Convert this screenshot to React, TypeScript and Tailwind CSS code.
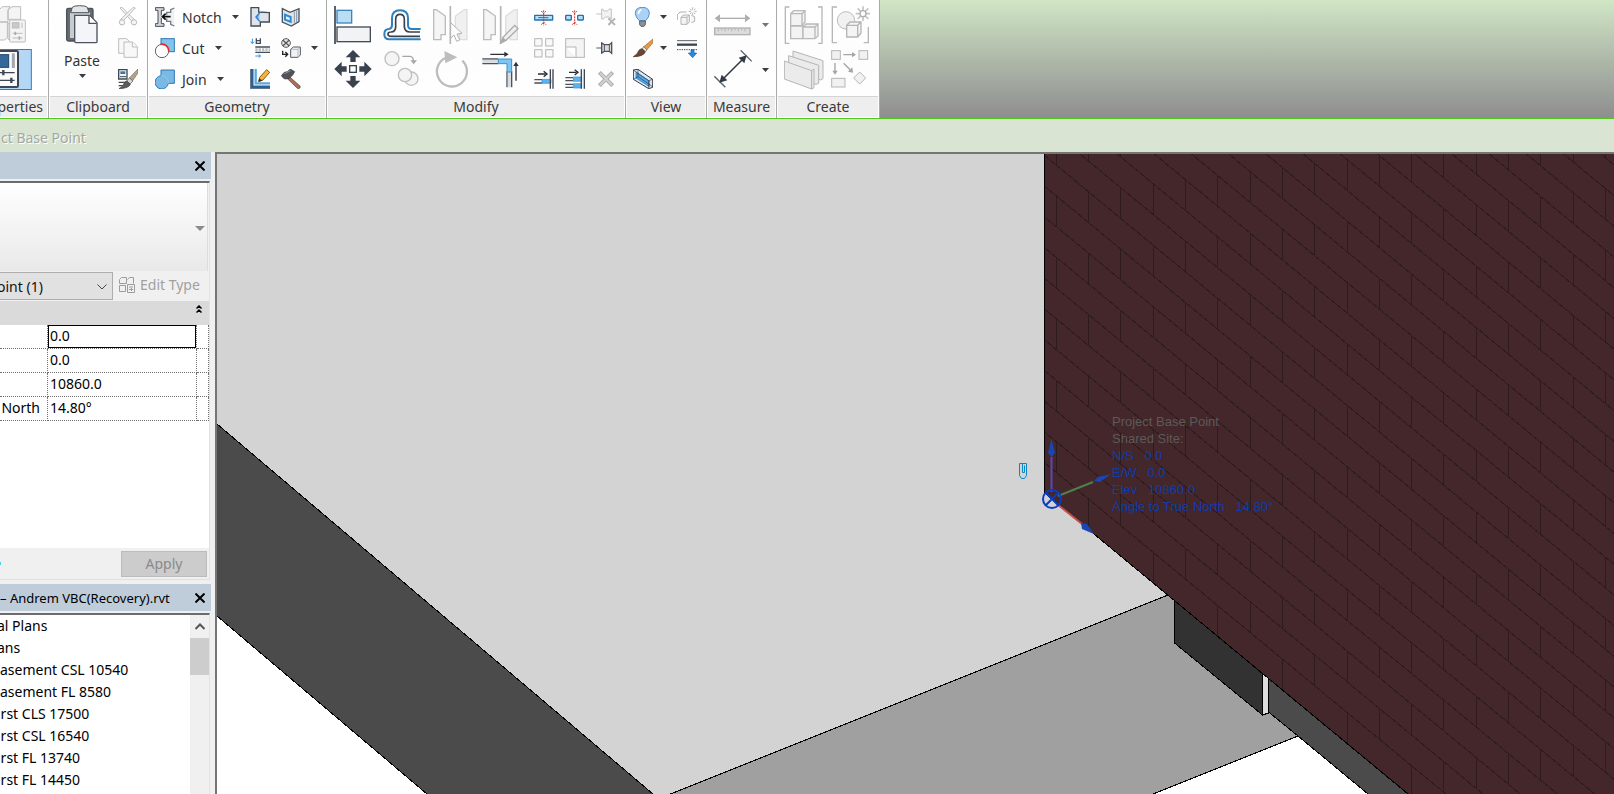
import type { ReactNode } from "react";

type IconProps = { box: string; className?: string; children: ReactNode };

function Icon({ box, className = "size-5", children }: IconProps) {
  return (
    <svg viewBox={box} className={`${className} block shrink-0`} fill="none" aria-hidden="true">
      {children}
    </svg>
  );
}

function Tool({ label, disabled, children, className = "" }: { label: string; disabled?: boolean; children: ReactNode; className?: string }) {
  return (
    <button type="button" aria-label={label} disabled={disabled} className={`flex shrink-0 items-center ${className}`}>
      {children}
    </button>
  );
}

function Arrow() {
  return (
    <svg viewBox="0 0 7 4" className="block h-1 w-[7px] shrink-0 fill-[#3c3c3c]" aria-hidden="true">
      <path d="M0 0H7L3.5 4Z" />
    </svg>
  );
}

function Panel({ title, width, children }: { title: string; width: string; children: ReactNode }) {
  return (
    <section className={`flex shrink-0 flex-col border-r border-[#a9aba9] bg-linear-to-b from-white via-[#fdfdfd] to-white ${width}`}>
      <div className="flex h-24 items-start">{children}</div>
      <h2 className="mx-px flex h-[21px] items-end justify-center overflow-hidden border-t border-[#d4d4d4] bg-[#eeeeee] text-[14px] leading-5 text-[#3a3a3a]">
        {title}
      </h2>
      <div className="h-px bg-white" />
    </section>
  );
}

const column = "flex flex-col gap-[11px] pt-[7px]";
const bigColumn = "flex flex-col gap-1.5 pt-1.5";

function PropertiesPanel() {
  return (
    <section className="flex w-[49px] shrink-0 flex-col border-r border-[#a9aba9] bg-white">
      <div className="flex h-24 flex-col items-start gap-[5px] pt-1.5">
        <Tool label="Type properties" disabled>
          <Icon box="0 18 84 114" className="h-[38px] w-7">
            <g stroke="#bcbcbc" strokeWidth="3" fill="#f4f4f4">
              <path d="M-4 30L8 20H30L24 30V66H-4ZM24 30L36 20H62V58H24ZM-4 66H22V112L14 120H-4ZM24 70H40V118H24Z" />
              <rect x="29" y="60" width="47" height="66" rx="3" />
              <rect x="37" y="68" width="20" height="16" fill="#c9c9c9" />
              <path d="M66 68V84M38 100H68M38 114H68" />
            </g>
            <path d="M46 95V105M58 109V119" stroke="#aaa" strokeWidth="5" />
          </Icon>
        </Tool>
        <Tool label="Properties">
          <Icon box="0 147 96 123" className="h-[41px] w-8">
            <rect x="-3" y="148.500" width="97" height="120" fill="#b4d7f6" stroke="#2a7fcf" strokeWidth="3" />
            <rect x="-10" y="153" width="64" height="108" rx="4" fill="#fafafa" stroke="#3d4654" strokeWidth="6" />
            <rect x="-4" y="164" width="30" height="38" fill="#35689a" stroke="#1f466c" strokeWidth="3" />
            <path d="M40 160V204" stroke="#a5a9ad" strokeWidth="9" />
            <path d="M0 218H44M0 241H44" stroke="#3d4654" strokeWidth="4" />
            <path d="M10 210V226M34 233V249" stroke="#3d4654" strokeWidth="7" />
          </Icon>
        </Tool>
      </div>
      <h2 className="mr-px flex h-[21px] items-end justify-end overflow-hidden border-t border-[#d4d4d4] bg-[#eeeeee] pr-1 text-[14px] leading-5 text-[#3a3a3a]">
        perties
      </h2>
      <div className="h-px bg-white" />
    </section>
  );
}

function ClipboardPanel() {
  return (
    <Panel title="Clipboard" width="w-[99px]">
      <button type="button" className="flex w-[66px] flex-col items-center pt-[5px] text-[14px] leading-5 text-[#333]">
        <Icon box="198 15 102 117" className="h-[39px] w-[34px]">
          <rect x="203" y="25" width="79" height="98" rx="5" fill="#686c72" stroke="#4c5057" strokeWidth="4" />
          <rect x="213" y="36" width="60" height="78" fill="#c8cbd0" />
          <path d="M220 22Q224 17 242 17Q262 17 265 22L270 38H215Z" fill="#e3e6e9" stroke="#4f555e" strokeWidth="3" />
          <path d="M227 46H272L294 68V125Q294 128 290 128H231Q227 128 227 124Z" fill="#f3f5f8" stroke="#4b535f" strokeWidth="4" />
          <path d="M270 47V70H293" fill="#fff" stroke="#4b535f" strokeWidth="4" />
        </Icon>
        <span className="mt-[7px]">Paste</span>
        <span className="mt-[3px]"><Arrow /></span>
      </button>
      <div className={`${column} pl-[3px]`}>
        <Tool label="Cut to clipboard" disabled>
          <Icon box="354 21 60 60">
            <g stroke="#b9b9b9" strokeWidth="3" fill="#f5f5f5">
              <path d="M360 24L396 64L402 58L366 22Z" />
              <path d="M406 24L368 64L362 58L400 22Z" />
              <circle cx="366" cy="67" r="8" />
              <circle cx="402" cy="67" r="8" />
            </g>
          </Icon>
        </Tool>
        <Tool label="Copy to clipboard" disabled>
          <Icon box="354 114 60 60">
            <g stroke="#bdbdbd" strokeWidth="3" fill="#f8f8f8">
              <path d="M356 116H380L390 126V160H356Z" />
              <path d="M372 126H398L412 140V172H372Z" />
              <path d="M397 126V141H412" />
            </g>
          </Icon>
        </Tool>
        <Tool label="Match type properties">
          <Icon box="354 207 60 60">
            <path d="M356 209H381V237H356Z" fill="#f2f4f6" stroke="#3f4956" strokeWidth="4" />
            <path d="M361 214H376V222H361Z" fill="#3478b5" />
            <path d="M360 230H378" stroke="#3f4956" strokeWidth="3" />
            <path d="M356 247H374M356 257H368" stroke="#3f4956" strokeWidth="4" />
            <path d="M414 207L413 220L398 242L388 234Z" fill="#b5a48c" stroke="#6f6758" strokeWidth="2" />
            <path d="M388 234L399 243L390 252L380 244Z" fill="#d8d8d8" stroke="#555" strokeWidth="2" />
            <path d="M380 243L391 252Q388 265 357 266Q371 258 372 250Q374 244 380 243Z" fill="#5d5a58" stroke="#3d3a38" strokeWidth="2" />
          </Icon>
        </Tool>
      </div>
    </Panel>
  );
}

function GeometryPanel() {
  const row = "flex h-5 items-center text-[14px] leading-5 text-[#333]";
  const text = "ml-[7px] mr-2.5 pt-px";
  return (
    <Panel title="Geometry" width="w-[179px]">
      <div className={`${column} w-[102px] pl-[7px]`}>
        <button type="button" className={row}>
          <Icon box="465 21 60 60">
            <path d="M466 23H492V31H484V71H492V79H466V71H474V31H466Z" fill="#d5d9de" stroke="#444b55" strokeWidth="3" />
            <path d="M523 24L512 29V37H500V64H512V73L523 78" fill="#eef0f2" stroke="#747a83" strokeWidth="4" />
            <path d="M486 50H512M497 41L487 50L497 59" stroke="#fff" strokeWidth="9" />
            <path d="M486 50H512M497 41L487 50L497 59" stroke="#111" strokeWidth="5" />
          </Icon>
          <span className={text}>Notch</span>
          <Arrow />
        </button>
        <button type="button" className={row}>
          <Icon box="465 114 60 60">
            <rect x="483" y="116" width="40" height="39" fill="#86c3ea" stroke="#2d7ab5" strokeWidth="3" />
            <circle cx="486" cy="153" r="20" fill="#fff" stroke="#59616b" strokeWidth="3" />
            <path d="M482 133A20 20 0 0 1 506 155" stroke="#ef2b2d" strokeWidth="5" />
          </Icon>
          <span className={text}>Cut</span>
          <Arrow />
        </button>
        <button type="button" className={row}>
          <Icon box="465 207 60 60">
            <path d="M483 210H523V250H505A20 20 0 1 1 483 227Z" fill="#79b9e4" stroke="#2d7ab5" strokeWidth="3" />
            <path d="M483 227A20 20 0 0 1 505 250" stroke="#9ad0f3" strokeWidth="2" />
          </Icon>
          <span className={text}>Join</span>
          <Arrow />
        </button>
      </div>
      <div className={column}>
        <Tool label="Wall joins">
          <Icon box="750 21 60 60">
            <path d="M753 23H776V36L808 38V66H781V78H753Z" fill="#dfe4ea" stroke="#444c57" strokeWidth="4" />
            <path d="M766 51L778 38V65Z" fill="#7fc0f5" />
            <path d="M779 39L768 51L779 64" stroke="#2c7fd0" strokeWidth="4" />
          </Icon>
        </Tool>
        <Tool label="Beam and column joins">
          <Icon box="750 114 60 60">
            <path d="M757 116V130M752 125L757 131L762 125" stroke="#2d93e6" strokeWidth="3" />
            <path d="M769 115V130H781V115M769 122H781" stroke="#454d58" strokeWidth="4" />
            <path d="M766 141H810M766 157H810" stroke="#454d58" strokeWidth="4" />
            <path d="M766 149H810" stroke="#b9bec5" strokeWidth="9" strokeDasharray="7 3" />
            <path d="M766 168H781M776 163L782 168L776 173" stroke="#2d93e6" strokeWidth="3" />
          </Icon>
        </Tool>
        <Tool label="Edit profile">
          <Icon box="750 207 60 60">
            <path d="M756 207V261H810" stroke="#27629a" strokeWidth="9" />
            <path d="M767 207V250H810" stroke="#5ea8dd" strokeWidth="7" />
            <path d="M751 207V266H810" stroke="#484f59" strokeWidth="2" />
            <path d="M779 232L800 209L809 217L789 240L776 244Z" fill="#f4b43c" stroke="#8b5a1a" strokeWidth="3" />
            <path d="M775 246L778 235L787 242Z" fill="#3a2b1a" />
          </Icon>
        </Tool>
      </div>
      <div className={`${column} ml-[11px]`}>
        <Tool label="Cope">
          <Icon box="843 21 60 60">
            <path d="M847 26L870 37L897 26V65L874 78L847 66Z" fill="#dfe6ec" stroke="#4a535e" strokeWidth="4" />
            <path d="M852 40L875 49V70L852 61Z" fill="#2f8ad2" />
            <path d="M858 49L869 53V61L858 57Z" fill="#e8f4fc" />
            <path d="M890 31V67M883 34V71" stroke="#8d96a1" strokeWidth="3" />
          </Icon>
        </Tool>
        <Tool label="Split face">
          <Icon box="843 114 60 60">
            <circle cx="858" cy="129" r="13" fill="#e7e7e7" stroke="#58585a" strokeWidth="3" />
            <path d="M849 121L867 137M867 121L849 137" stroke="#58585a" strokeWidth="4" />
            <path d="M848 152V163H862M856 156L863 163L856 170" stroke="#222" strokeWidth="4" />
            <path d="M872 148L880 141H901V165L894 172H872Z" fill="#f0f1f3" stroke="#555c66" strokeWidth="3" />
            <path d="M872 148H894L901 141M894 148V172" stroke="#9aa0a8" strokeWidth="2" />
          </Icon>
        </Tool>
        <Tool label="Demolish">
          <Icon box="843 207 60 60">
            <path d="M866 228L900 258Q903 264 896 266Q891 266 889 262L860 234Z" fill="#a8705a" stroke="#5f3a2c" strokeWidth="2" />
            <path d="M844 227L853 217L862 215L871 207L884 215L878 225L868 235L856 237L851 235Z" fill="#50545a" stroke="#303338" strokeWidth="2" />
            <path d="M853 221L872 212" stroke="#999" strokeWidth="3" />
          </Icon>
        </Tool>
      </div>
      <button type="button" aria-label="More joins" className="ml-2.5 mt-[46px]"><Arrow /></button>
    </Panel>
  );
}

function ModifyPanel() {
  return (
    <Panel title="Modify" width="w-[299px]">
      <div className={`${bigColumn} ml-[7px]`}>
        <Tool label="Align">
          <Icon box="42 18 114 114" className="size-[38px]">
            <rect x="51" y="31" width="44" height="38" fill="#b9ddf3" stroke="#3b86bd" strokeWidth="4" />
            <rect x="51" y="81" width="100" height="44" fill="#f2f3f5" stroke="#444c58" strokeWidth="4" />
            <path d="M45 18V134" stroke="#3b424d" strokeWidth="5" />
          </Icon>
        </Tool>
        <Tool label="Move">
          <Icon box="42 150 114 114" className="size-[38px]">
            <path d="M99 150L121 172H107V186H91V172H77ZM99 264L121 242H107V228H91V242H77ZM43 207L65 185V199H80V215H65V229ZM155 207L133 185V199H118V215H133V229Z" fill="#3a424e" />
            <rect x="89" y="197" width="20" height="20" fill="#fff" stroke="#3a424e" strokeWidth="4" />
          </Icon>
        </Tool>
      </div>
      <div className={`${bigColumn} ml-[11px]`}>
        <Tool label="Offset">
          <Icon box="189 18 114 114" className="size-[38px]">
            <path d="M302 118H208Q193 118 193 103Q193 87 207 87Q216 86 216 75V54Q216 31 240 31Q264 31 264 54V75Q264 87 275 87H302" stroke="#2f80bd" strokeWidth="6" />
            <path d="M300 109H213Q204 109 204 102Q204 96 213 96Q227 95 227 80V58Q227 43 240 43Q253 43 253 58V80Q254 96 270 96H300" stroke="#39414b" strokeWidth="5" />
          </Icon>
        </Tool>
        <Tool label="Copy" disabled>
          <Icon box="189 150 114 114" className="size-[38px]">
            <g stroke="#bfbfbf" strokeWidth="4" fill="#f4f4f4">
              <circle cx="216" cy="176" r="21" />
              <circle cx="274" cy="236" r="20" />
              <circle cx="255" cy="225" r="20" />
            </g>
            <path d="M247 169H270Q281 169 281 188" stroke="#a7a7a7" strokeWidth="4" />
            <path d="M271 181L281 193L291 181Z" fill="#a7a7a7" />
          </Icon>
        </Tool>
      </div>
      <div className={`${bigColumn} ml-[11px]`}>
        <Tool label="Mirror pick axis" disabled>
          <Icon box="339 18 114 114" className="size-[38px]">
            <path d="M344 29H352L379 48V104H366V119H344Z" fill="#f5f5f5" stroke="#bcbcbc" strokeWidth="4" />
            <path d="M444 29H436L409 48V104H422V119H444Z" fill="#f0f0f0" stroke="#dedede" strokeWidth="4" />
            <path d="M394 18V132" stroke="#b5b5b5" strokeWidth="5" />
            <path d="M395 68L429 100L414 102L422 120L413 124L405 105L395 114Z" fill="#fdfdfd" stroke="#b3b3b3" strokeWidth="3" />
          </Icon>
        </Tool>
        <Tool label="Rotate" disabled>
          <Icon box="339 150 114 114" className="size-[38px]">
            <path d="M430 182A45 45 0 1 1 379 174" stroke="#bdbdbd" strokeWidth="7" />
            <path d="M376 153L415 172L379 190Z" fill="#bdbdbd" />
          </Icon>
        </Tool>
      </div>
      <div className={`${bigColumn} ml-[11px]`}>
        <Tool label="Mirror draw axis" disabled>
          <Icon box="483 18 114 114" className="size-[38px]">
            <path d="M491 29H499L526 48V104H513V119H491Z" fill="#f5f5f5" stroke="#bcbcbc" strokeWidth="4" />
            <path d="M592 29H584L557 48V104H570V119H592Z" fill="#f0f0f0" stroke="#dedede" strokeWidth="4" />
            <path d="M542 18V132" stroke="#b5b5b5" strokeWidth="5" />
            <path d="M542 129L549 112L584 76L594 86L558 121Z" fill="#eee" stroke="#ababab" strokeWidth="4" />
            <path d="M542 129L549 112L558 121Z" fill="#aaa" />
          </Icon>
        </Tool>
        <Tool label="Trim to corner">
          <Icon box="484 150 114 114" className="size-[38px]">
            <path d="M488 177H536M488 191H536M562 214V262M576 214V262" stroke="#4a525d" strokeWidth="4" />
            <path d="M488 184H536M569 214V262" stroke="#d7dade" strokeWidth="9" />
            <path d="M536 177H576V216H562V191H536Z" fill="#7ec5f3" stroke="#3292d6" strokeWidth="3" />
            <path d="M512 163H560M589 242V192" stroke="#2c3139" strokeWidth="4" />
            <path d="M554 155L567 163L554 171ZM581 198L589 185L597 198Z" fill="#2c3139" />
          </Icon>
        </Tool>
      </div>
      <div className={`${column} ml-[15px]`}>
        <Tool label="Split element">
          <Icon box="642 21 60 60">
            <rect x="644" y="46" width="54" height="14" rx="1" fill="#b9ddf4" stroke="#2372ae" strokeWidth="4" />
            <path d="M655 53H685" stroke="#2372ae" strokeWidth="3" />
            <path d="M671 31V77M664 33L671 41L678 33M664 74L671 66L678 74" stroke="#d02c22" strokeWidth="3" strokeDasharray="6 3" />
          </Icon>
        </Tool>
        <Tool label="Array" disabled>
          <Icon box="642 114 60 60">
            <g fill="#f8f8f8" stroke="#b5b5b5" strokeWidth="3">
              <rect x="644" y="116" width="22" height="22" />
              <rect x="677" y="116" width="22" height="22" />
              <rect x="644" y="149" width="22" height="22" />
              <rect x="677" y="149" width="22" height="22" />
            </g>
          </Icon>
        </Tool>
        <Tool label="Trim single element">
          <Icon box="642 207 60 60">
            <path d="M643 239H666M643 249H666" stroke="#4a525d" strokeWidth="4" />
            <path d="M666 238H693V250H666Z" fill="#5fb2f0" stroke="#2d8bdb" strokeWidth="2" />
            <path d="M691 208V266M699 208V266" stroke="#3f4751" strokeWidth="4" />
            <path d="M654 222H676M671 214L681 222L671 230" stroke="#252a31" strokeWidth="4" />
          </Icon>
        </Tool>
      </div>
      <div className={`${column} ml-[11px]`}>
        <Tool label="Split with gap">
          <Icon box="735 21 60 60">
            <rect x="737" y="46" width="17" height="14" rx="2" fill="#b9ddf4" stroke="#2372ae" strokeWidth="4" />
            <rect x="773" y="46" width="17" height="14" rx="2" fill="#b9ddf4" stroke="#2372ae" strokeWidth="4" />
            <path d="M764 31V77M757 33L764 41L771 33M757 74L764 66L771 74" stroke="#d02c22" strokeWidth="3" strokeDasharray="6 3" />
          </Icon>
        </Tool>
        <Tool label="Scale" disabled>
          <Icon box="735 114 60 60">
            <rect x="737" y="116" width="56" height="56" fill="#f4f4f4" stroke="#b5b5b5" strokeWidth="3" />
            <path d="M737 141H768V172" fill="#fff" stroke="#b5b5b5" strokeWidth="3" />
          </Icon>
        </Tool>
        <Tool label="Trim multiple elements">
          <Icon box="735 207 60 60">
            <path d="M736 233H760M736 242H760M736 253H760M736 262H760" stroke="#4a525d" strokeWidth="4" />
            <path d="M760 231H785V244H760ZM760 251H785V264H760Z" fill="#5fb2f0" stroke="#2d8bdb" strokeWidth="2" />
            <path d="M784 208V266M793 208V266" stroke="#3f4751" strokeWidth="4" />
            <path d="M747 217H769M764 209L774 217L764 225" stroke="#252a31" strokeWidth="4" />
          </Icon>
        </Tool>
      </div>
      <div className={`${column} ml-[11px]`}>
        <Tool label="Unpin" disabled>
          <Icon box="828 21 60 60">
            <path d="M829 42H845M845 27V57H850L856 51H866L874 57V27H868L862 33H852L848 27Z" fill="#f2f2f2" stroke="#c2c2c2" strokeWidth="3" />
            <path d="M865 55L885 75M885 55L865 75" stroke="#b5b5b5" strokeWidth="6" />
          </Icon>
        </Tool>
        <Tool label="Pin">
          <Icon box="828 114 60 60">
            <path d="M829 144H845" stroke="#555c65" strokeWidth="3" />
            <path d="M845 129V159L853 154H868L875 160V128L868 134H853Z" fill="#dadde0" stroke="#4c535c" strokeWidth="4" />
            <path d="M853 134V154M868 134V154" stroke="#4c535c" strokeWidth="3" />
          </Icon>
        </Tool>
        <Tool label="Delete" disabled>
          <Icon box="828 207 60 60">
            <path d="M838 217L878 257M878 217L838 257" stroke="#adadad" strokeWidth="12" />
            <path d="M840 219L876 255M876 219L840 255" stroke="#d2d2d2" strokeWidth="6" />
          </Icon>
        </Tool>
      </div>
    </Panel>
  );
}

function ViewPanel() {
  return (
    <Panel title="View" width="w-[81px]">
      <div className={`${column} ml-[7px]`}>
        <Tool label="Hide in view" className="gap-[7px]">
          <Icon box="39 21 60 60">
            <path d="M58 62Q47 52 46 41Q46 22 67 22Q88 22 88 41Q87 52 77 62Z" fill="#a9d2f6" stroke="#4f90d4" strokeWidth="3" />
            <path d="M55 42Q56 32 64 29" stroke="#fff" strokeWidth="5" />
            <path d="M59 63H76V74L72 79H63L59 74Z" fill="#8d9299" stroke="#5a5f66" strokeWidth="3" />
          </Icon>
          <Arrow />
        </Tool>
        <Tool label="Override graphics" className="gap-[7px]">
          <Icon box="39 114 60 60">
            <path d="M99 117V128L80 150L70 141Z" fill="#e19a4d" stroke="#a5642a" strokeWidth="2" />
            <path d="M71 140L81 150L75 155L66 147Z" fill="#e8e8e8" stroke="#666" strokeWidth="2" />
            <path d="M66 146L76 155Q71 170 40 170Q53 163 55 154Q58 147 66 146Z" fill="#6b4632" stroke="#482c1d" strokeWidth="2" />
          </Icon>
          <Arrow />
        </Tool>
        <Tool label="Selection box">
          <Icon box="39 207 60 60">
            <path d="M40 210L54 208L98 238V262L86 266L40 238Z" fill="#dfe7ef" stroke="#343b45" strokeWidth="3" />
            <path d="M48 217L88 243V260L48 234Z" fill="#4fa9ee" stroke="#1c6fb8" strokeWidth="2" />
            <path d="M54 208V230L98 260M40 238L54 230M40 210L86 242V266M86 242L98 238" stroke="#343b45" strokeWidth="2" />
          </Icon>
        </Tool>
      </div>
      <div className={`${column} ml-2.5`}>
        <Tool label="Displace elements" disabled>
          <Icon box="171 21 60 60">
            <g stroke="#b3b3b3" strokeWidth="3" fill="#f5f5f5">
              <path d="M172 44L180 36H200M172 44V60M183 52L190 45H208V66L201 73H183ZM183 52H201V73M201 52L208 45M214 46L224 50V64L214 68" />
            </g>
            <path d="M218 22V45M206 34H230M210 26L226 42M226 26L210 42" stroke="#b3b3b3" strokeWidth="3" />
            <circle cx="218" cy="34" r="5" fill="#fff" />
          </Icon>
        </Tool>
        <Tool label="Linework">
          <Icon box="171 114 60 60">
            <path d="M171 122H231" stroke="#5a6068" strokeWidth="3" />
            <path d="M171 134H231" stroke="#3e454f" strokeWidth="7" />
            <path d="M171 149H231" stroke="#3e454f" strokeWidth="3" strokeDasharray="4 3" />
            <path d="M213 149H222V159H230L218 173L205 159H213Z" fill="#2b87e3" stroke="#1460ae" strokeWidth="2" />
          </Icon>
        </Tool>
      </div>
    </Panel>
  );
}

function MeasurePanel() {
  return (
    <Panel title="Measure" width="w-[70px]">
      <div className={`${bigColumn} ml-[7px]`}>
        <Tool label="Measure between points" disabled>
          <Icon box="282 18 114 114" className="size-[38px]">
            <path d="M292 55H384" stroke="#aeaeae" strokeWidth="4" />
            <path d="M284 55L300 43V67ZM391 55L375 43V67Z" fill="#aeaeae" />
            <rect x="284" y="84" width="106" height="20" fill="#dcdcdc" stroke="#b2b2b2" strokeWidth="4" />
            <path d="M295 86V94M305 86V91M315 86V94M325 86V91M335 86V94M345 86V91M355 86V94M365 86V91M375 86V94" stroke="#b2b2b2" strokeWidth="3" />
          </Icon>
        </Tool>
        <Tool label="Aligned dimension">
          <Icon box="282 150 114 114" className="size-[38px]">
            <path d="M362 151L395 184M283 229L316 262" stroke="#59616c" strokeWidth="4" />
            <path d="M306 240L372 174" stroke="#333a45" strokeWidth="5" />
            <path d="M380 166L373 190L356 173ZM298 248L305 224L322 241Z" fill="#333a45" />
          </Icon>
        </Tool>
      </div>
      <div className="ml-2.5 flex flex-col gap-[41px] pt-[23px]">
        <button type="button" aria-label="Measure options" className="opacity-70"><Arrow /></button>
        <button type="button" aria-label="Dimension options"><Arrow /></button>
      </div>
    </Panel>
  );
}

function CreatePanel() {
  return (
    <Panel title="Create" width="w-[103px]">
      <div className={`${bigColumn} ml-[7px]`}>
        <Tool label="Create assembly" disabled>
          <Icon box="490 17 117 114" className="h-[38px] w-[39px]">
            <path d="M506 20H494V129H506M592 20H604V129H592" stroke="#b7b7b7" strokeWidth="4" />
            <g fill="#f3f3f3" stroke="#b9b9b9" strokeWidth="4">
              <path d="M510 40L519 31H553V65L544 76H510Z" />
              <path d="M510 40H544V76M544 40L553 31" />
              <path d="M510 77H547V115H510Z" />
              <path d="M547 80L556 71H592V107L583 115H547Z" />
              <path d="M547 80H583V115M583 80L592 71" />
            </g>
          </Icon>
        </Tool>
        <Tool label="Create parts" disabled>
          <Icon box="490 150 120 120" className="size-10">
            <g fill="#ebebeb" stroke="#b5b5b5" strokeWidth="3">
              <path d="M517 153L607 182V236L600 240L517 210Z" />
              <path d="M504 167L594 196V250L586 253L504 224Z" />
              <path d="M491 183L573 212V267L491 237Z" />
              <path d="M573 212L580 207V263L573 267Z" />
            </g>
          </Icon>
        </Tool>
      </div>
      <div className={`${bigColumn} ml-[7px]`}>
        <Tool label="Create group" disabled>
          <Icon box="634 17 117 114" className="h-[38px] w-[39px]">
            <path d="M652 20H638V127H652M732 127H746V80" stroke="#b7b7b7" strokeWidth="4" />
            <circle cx="679" cy="60" r="26" fill="#f1f1f1" stroke="#bcbcbc" strokeWidth="3" />
            <path d="M681 75L691 65H724V98L714 110H681ZM681 75H714V110M714 75L724 65" fill="#f4f4f4" stroke="#b5b5b5" strokeWidth="4" />
            <path d="M730 18V62M708 40H752M714 24L746 56M746 24L714 56" stroke="#c3c3c3" strokeWidth="5" />
            <circle cx="730" cy="40" r="9" fill="#fff" stroke="#b0b0b0" strokeWidth="4" />
          </Icon>
        </Tool>
        <Tool label="Create similar" disabled>
          <Icon box="634 150 114 114" className="size-[38px]">
            <g fill="#f1f1f1" stroke="#b5b5b5" strokeWidth="3">
              <rect x="636" y="152" width="26" height="26" />
              <rect x="718" y="152" width="26" height="26" />
              <rect x="636" y="235" width="40" height="26" />
              <path d="M720 216L738 234L720 252L702 234Z" />
            </g>
            <path d="M671 164H700M646 189V214M672 190L692 210" stroke="#a4a4a4" strokeWidth="4" />
            <path d="M697 156L709 164L697 172ZM638 212L646 224L654 212ZM700 218L698 202L685 215Z" fill="#a4a4a4" />
          </Icon>
        </Tool>
      </div>
    </Panel>
  );
}

function Ribbon() {
  return (
    <header className="flex shrink-0 overflow-hidden border-b border-[#52c81a] bg-linear-to-b from-[#d0e6c5] to-[#8e8e8e]">
      <PropertiesPanel />
      <ClipboardPanel />
      <GeometryPanel />
      <ModifyPanel />
      <ViewPanel />
      <MeasurePanel />
      <CreatePanel />
    </header>
  );
}

function CloseButton({ label }: { label: string }) {
  return (
    <button type="button" aria-label={label} className="p-1">
      <svg viewBox="0 0 10 10" className="block size-2.5 stroke-black stroke-2" aria-hidden="true">
        <path d="M0.500 0.500L9.500 9.500M9.500 0.500L0.500 9.500" />
      </svg>
    </button>
  );
}

const properties = [
  { id: "ns", name: "", value: "0.0" },
  { id: "ew", name: "", value: "0.0" },
  { id: "elev", name: "", value: "10860.0" },
  { id: "angle", name: "North", value: "14.80°" },
];

function PropertiesPalette() {
  return (
    <section aria-label="Properties" className="mb-1 flex h-[428px] shrink-0 flex-col">
      <div className="flex h-[27px] shrink-0 items-center justify-end bg-[#bfccda] pr-0.5">
        <CloseButton label="Close properties" />
      </div>
      <div className="mr-px mt-0.5 flex flex-1 flex-col border-r border-[#e2e2e2] border-t-2 border-t-[#6c6c6c]">
        <button type="button" aria-label="Type selector" className="mr-px flex h-[88px] shrink-0 items-center justify-end border-r border-[#dcdcdc] bg-linear-to-b from-white to-[#e9e9e9] pr-0.5 pt-0.5">
          <svg viewBox="0 0 10 5" className="h-[5px] w-2.5 fill-[#8b8b8b]" aria-hidden="true"><path d="M0 0H10L5 5Z" /></svg>
        </button>
        <div className="flex h-[30px] shrink-0 items-center bg-[#f0f0f0]">
          <div className="relative h-7 w-[113px] overflow-hidden border border-l-0 border-[#adadad] bg-[#e1e1e1]">
            <select aria-label="Element filter" className="-ml-[3px] h-full w-full appearance-none pt-px text-[14px] leading-5 text-[#111]">
              <option>oint (1)</option>
            </select>
            <svg viewBox="0 0 10 6" className="pointer-events-none absolute right-[5px] top-[11px] h-1.5 w-2.5 fill-none stroke-[#444]" aria-hidden="true"><path d="M0.500 0.500L5 5L9.500 0.500" /></svg>
          </div>
          <button type="button" disabled className="ml-1.5 flex items-center gap-[5px] pb-0.5 text-[14px] leading-5 text-[#a0a0a0]">
            <svg viewBox="0 0 16 16" className="size-4 fill-none stroke-[#9c9c9c]" aria-hidden="true">
              <path d="M0.500 2.500L2.500 0.500H7.500V6.500H0.500ZM8.500 2.500L10.500 0.500H14.500V6.500M0.500 8.500H6.500V14.500H0.500Z" />
              <path d="M8.500 7.500H15.500V15.500H8.500ZM10 10H14M10 12.500H14M12.500 11V14" />
            </svg>
            Edit Type
          </button>
        </div>
        <button type="button" aria-label="Collapse group" className="flex h-6 shrink-0 items-start justify-end bg-[#dadada] pr-[7px] pt-1">
          <svg viewBox="0 0 6 8" className="h-2 w-1.5 fill-none stroke-black stroke-[1.5]" aria-hidden="true"><path d="M0.500 3.500L3 1L5.500 3.500M0.500 7.500L3 5L5.500 7.500" /></svg>
        </button>
        <div className="flex-1 bg-white">
          <table className="w-full table-fixed border-separate border-spacing-0 text-[14px] leading-5 text-black">
            <colgroup>
              <col className="w-12" />
              <col />
              <col className="w-3" />
            </colgroup>
            <tbody>
              {properties.map((p, i) => (
                <tr key={p.id} className="h-6">
                  <th scope="row" className="border-b border-r border-dotted border-[#707070] p-0 pb-0.5 pr-[7px] text-right font-normal">
                    {p.name}
                  </th>
                  <td className="border-b border-r border-dotted border-[#707070] p-0">
                    <input
                      aria-label={p.name || p.id}
                      defaultValue={p.value}
                      className={i === 0 ? "block h-[23px] w-full border border-black bg-white pb-0.5 pl-px" : "block h-[23px] w-full bg-white pb-0.5 pl-0.5"}
                    />
                  </td>
                  <td className="border-b border-r border-dotted border-[#707070] p-0" />
                </tr>
              ))}
            </tbody>
          </table>
        </div>
        <div className="flex h-8 shrink-0 items-center justify-between border-b border-[#e0e0e0] bg-[#f0f0f0] pr-0.5">
          <a href="#help" aria-label="Properties help" className="h-[3px] w-px bg-[#4fd0e8]" />
          <button type="button" disabled className="h-[26px] w-[86px] border border-[#bcbcbc] bg-[#cccccc] text-[14px] leading-5 text-[#8a8a8a]">
            Apply
          </button>
        </div>
      </div>
    </section>
  );
}

const views = [
  { name: "al Plans", indent: "-ml-[3px]" },
  { name: "ans", indent: "-ml-[3px]" },
  { name: "asement CSL 10540", indent: "ml-0" },
  { name: "asement FL 8580", indent: "ml-0" },
  { name: "irst CLS 17500", indent: "-ml-[3px]" },
  { name: "irst CSL 16540", indent: "-ml-[3px]" },
  { name: "irst FL 13740", indent: "-ml-[3px]" },
  { name: "irst FL 14450", indent: "-ml-[3px]" },
];

function ProjectBrowser() {
  return (
    <section aria-label="Project browser" className="flex min-h-0 flex-1 flex-col">
      <div className="flex h-[27px] shrink-0 items-center justify-between bg-[#bfccda] pr-0.5">
        <h2 className="whitespace-nowrap text-[13px] leading-5 text-black">– Andrem VBC(Recovery).rvt</h2>
        <CloseButton label="Close project browser" />
      </div>
      <div className="mr-px mt-0.5 flex min-h-0 flex-1 border-r border-t-2 border-[#e2e2e2] border-t-[#6c6c6c] bg-white">
        <ul className="min-w-0 flex-1 overflow-hidden whitespace-nowrap text-[14px] leading-[22px] text-black">
          {views.map((v) => (
            <li key={v.name} className={v.indent}>{v.name}</li>
          ))}
        </ul>
        <div className="flex w-[19px] shrink-0 flex-col bg-[#f0f0f0]">
          <button type="button" aria-label="Scroll up" className="flex h-[23px] items-center justify-center">
            <svg viewBox="0 0 10 7" className="h-[7px] w-2.5 fill-none stroke-[#555] stroke-2" aria-hidden="true"><path d="M0.500 6L5 1.500L9.500 6" /></svg>
          </button>
          <div className="h-[37px] bg-[#cdcdcd]" />
        </div>
      </div>
    </section>
  );
}

// Brick hatch: parallel courses following the wall edge, with staggered head joints.
const JOINT_X = 1056.4;
const JOINT_STEP = 32.29;
const COURSE_Y = 196;
const COURSE_STEP = 30.72;
const SLOPE = 0.8257;

const courseAt = (x: number, n: number) => COURSE_Y + COURSE_STEP * n + (x - JOINT_X) * SLOPE;

const courses = Array.from({ length: 42 }, (_, i) => i - 20)
  .map((n) => `M1044 ${courseAt(1044, n)}L1614 ${courseAt(1614, n)}`)
  .join("");

const joints = Array.from({ length: 18 }, (_, k) => {
  const x = JOINT_X + JOINT_STEP * k;
  return Array.from({ length: 22 }, (_, j) => (j - 11) * 2 + (k % 2))
    .map((n) => `M${x} ${courseAt(x, n)}V${courseAt(x, n + 1)}`)
    .join("");
}).join("");

function Scene() {
  return (
    <svg className="block h-full w-full" role="img" aria-label="3D view of slab and brick wall">
      <defs>
        <clipPath id="wall">
          <path d="M1044 154H1614V794H1408L1044 492.500Z" />
        </clipPath>
      </defs>
      <g transform="translate(-217 -154)" shapeRendering="crispEdges" stroke="#000" strokeWidth="1">
        <path d="M217 154H1044V492L1168 595L669 794H653L217 424Z" fill="#d3d3d3" stroke="none" />
        <path d="M217 424L653 794H427L217 616Z" fill="#4b4b4b" stroke="none" />
        <path d="M217 424L653 794M217 616L427 794" />
        <path d="M669.500 794L1168 595L1180 602L1300 700L1298 736L1153 794Z" fill="#a0a0a0" stroke="none" />
        <path d="M670.500 794L1168 595M1153 794L1298 736" />
        <path d="M1174.500 600V643L1262.500 715V673Z" fill="#323232" />
        <path d="M1262.500 673V715L1268.500 713V677Z" fill="#dcdcdc" />
        <path d="M1268.500 677V712L1298 736L1368 794H1408Z" fill="#4b4b4b" />
        <path d="M1044 154H1614V794H1408L1044 492.500Z" fill="#43272a" stroke="none" />
        <g clipPath="url(#wall)" stroke="#2e1b1e" fill="none">
          <path d={courses} />
          <path d={joints} />
        </g>
        <path d="M1044.500 154V493L1408 794" fill="none" />
      </g>
      <g transform="translate(-217 -154)" fill="none">
        <path d="M1051.500 492V457" stroke="#5a48b5" strokeWidth="2" />
        <path d="M1058 496L1093 482" stroke="#4f7f4a" strokeWidth="2" />
        <path d="M1057 504L1082 524" stroke="#c0504d" strokeWidth="2" />
        <g fill="#1a45b4">
          <path d="M1051.500 439L1055 453L1051.500 457L1048 453Z" />
          <path d="M1111 474L1100 482L1094 481L1098 477Z" />
          <path d="M1094 534L1082 529L1081 523L1087 524Z" />
        </g>
        <g stroke="#0a3cc4" strokeWidth="2">
          <circle cx="1052" cy="499" r="9" />
          <path d="M1046 493L1058 505M1058 493L1046 505" />
        </g>
        <path d="M1019.500 463.500H1026.500V475.500L1024.500 478.500H1021.500L1019.500 475.500ZM1022.500 463.500V472.500H1024.500V465.500" stroke="#0a86c6" />
      </g>
    </svg>
  );
}

function DrawingView() {
  return (
    <main className="relative min-w-0 flex-1 overflow-hidden border-l-2 border-t-2 border-[#757575] bg-white">
      <Scene />
      <div className="absolute left-[895px] top-[259px] whitespace-pre font-['Liberation_Sans',Arial,sans-serif] text-[13px] leading-[17px] text-[#0d3cab]">
        <p className="text-[#5d5a5a]">Project Base Point</p>
        <p className="text-[#5d5a5a]">Shared Site:</p>
        <p>{"N/S   0.0"}</p>
        <p>{"E/W   0.0"}</p>
        <p>{"Elev   10860.0"}</p>
        <p>{"Angle to True North   14.80°"}</p>
      </div>
    </main>
  );
}

export default function App() {
  return (
    <div className="flex h-screen flex-col overflow-hidden bg-[#f0f0f0] font-['Noto_Sans',sans-serif]">
      <Ribbon />
      <div className="flex h-[33px] shrink-0 items-center bg-[#d9e4d2] pl-px pt-1 text-[14px] leading-5 text-[#a3a8a0] [text-shadow:1px_1px_0_#fff]">
        ct Base Point
      </div>
      <div className="flex min-h-0 flex-1">
        <aside className="mr-1 flex w-[211px] shrink-0 flex-col bg-[#f0f0f0]">
          <PropertiesPalette />
          <ProjectBrowser />
        </aside>
        <DrawingView />
      </div>
    </div>
  );
}
